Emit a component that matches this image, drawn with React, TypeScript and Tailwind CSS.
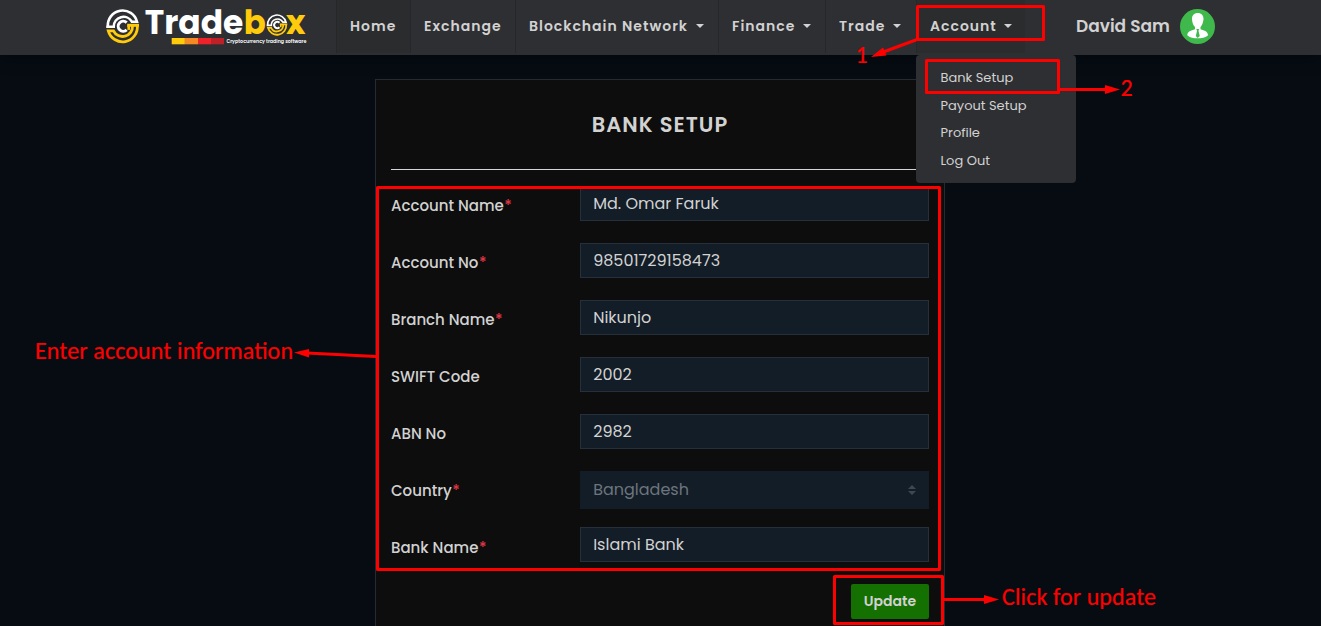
import { ReactNode } from "react";

function Emblem({ x, y, scale }: { x: number; y: number; scale: number }) {
  return (
    <g transform={`translate(${x} ${y}) scale(${scale})`} fill="none">
      <path d="M-14.8 .5A14.8 14.8 0 0 1 14.3 -4.5H9.3A9.8 9.8 0 0 0 -9 .5H-16.5" stroke="#fff" strokeWidth="2.6" />
      <path d="M4 -3.6A5 5 0 1 0 4 3.6" stroke="#fff" strokeWidth="3" />
      <path d="M4.5 -1H16.3" stroke="#ffcb0a" strokeWidth="3" />
      <path d="M6 -1V3.6" stroke="#ffcb0a" strokeWidth="2.6" />
      <path d="M14.6 -1A14.8 14.8 0 0 1 -14.4 4.5H-9.2A10 10 0 0 0 9.8 -.5" stroke="#ffcb0a" strokeWidth="2.8" />
    </g>
  );
}

function Logo() {
  return (
    <svg width="205" height="48" viewBox="104 0 205 48" className="block shrink-0 font-['Poppins','Inter',sans-serif]">
      <Emblem x={122.7} y={26.3} scale={1} />
      <text x="144.8" y="34.3" fontSize="34" fontWeight="700" fill="#fff" textLength="98.5" lengthAdjust="spacingAndGlyphs">Trade</text>
      <text x="243.8" y="34.3" fontSize="34" fontWeight="700" fill="#ffcb0a" textLength="22" lengthAdjust="spacingAndGlyphs">b</text>
      <Emblem x={277} y={25} scale={0.63} />
      <text x="286" y="34.3" fontSize="34" fontWeight="700" fill="#ffcb0a" textLength="19.5" lengthAdjust="spacingAndGlyphs">x</text>
      <rect x="171.7" y="38" width="13.2" height="6.3" fill="#ffcb0a" />
      <rect x="184.8" y="38" width="13.2" height="6.3" fill="#f58a25" />
      <rect x="198" y="38" width="13.2" height="6.3" fill="#ee2229" />
      <rect x="211" y="38" width="13" height="6.3" fill="#bd2026" />
      <text x="226.5" y="43" fontSize="4.8" fontWeight="600" fill="#fff" textLength="80" lengthAdjust="spacingAndGlyphs">Cryptocurrency trading software</text>
    </svg>
  );
}

function Caret({ className }: { className: string }) {
  return <span className={`relative -top-px block h-0 w-0 border-x-4 border-t-4 border-x-transparent border-t-[#d2d2d2] ${className}`} />;
}

function NavItem({ label, width, caret, active }: { label: string; width: string; caret?: string; active?: boolean }) {
  return (
    <a className={`flex h-[53px] shrink-0 items-center border-l border-[#26272a] pl-[13px] ${width} ${active ? "bg-[#2b2c2e]" : ""}`}>
      <span className="whitespace-nowrap text-[14px] font-semibold tracking-[1px] text-[#d2d2d2]">{label}</span>
      {caret && <Caret className={caret} />}
    </a>
  );
}

function Row({ label, required, pad = "pt-[9px]", className, children }: { label: string; required?: boolean; pad?: string; className: string; children: ReactNode }) {
  return (
    <div className={`flex shrink-0 ${className}`}>
      <label className={`w-[189px] shrink-0 whitespace-nowrap text-[15px] leading-[22px] font-medium text-[#d2d2d2] ${pad}`}>
        {label}
        {required && <span className="ml-[0.5px] text-[#dc3545]">*</span>}
      </label>
      {children}
    </div>
  );
}

function Field({ value }: { value: string }) {
  return (
    <div className="h-[35px] w-[349px] border border-[#26303a] bg-[#131d27] pl-[12.2px] text-[16px] leading-[33px] text-[#d2d2d2]">
      {value}
    </div>
  );
}

function Annotations() {
  return (
    <svg width="1321" height="626" className="pointer-events-none absolute inset-0 z-20 font-['Carlito','Lato',sans-serif]">
      <g fill="none" stroke="#f00" strokeWidth="3" strokeLinejoin="round">
        <rect x="917.5" y="6.5" width="126" height="33" />
        <rect x="926.5" y="60.5" width="132" height="32" />
        <rect x="377.5" y="187.5" width="562" height="382" />
        <rect x="834.5" y="576.5" width="108" height="47" />
        <path d="M917 39.5L882 52.5M1058 89.5H1106M376 356.5L307 353M943 599.5H986" />
      </g>
      <g fill="#f00">
        <path d="M871 57L883 47.5L886.5 55.5Z" />
        <path d="M1120 89.5L1105 85V94Z" />
        <path d="M294 352.5L309 349V357.5Z" />
        <path d="M999 599.5L984 595V604Z" />
        <g fontSize="24" stroke="#f00" strokeWidth="0.2">
          <text x="855.5" y="63">1</text>
          <text x="1120.5" y="96">2</text>
          <text x="35" y="359" textLength="258">Enter account information</text>
          <text x="1002" y="605" textLength="154">Click for update</text>
        </g>
      </g>
    </svg>
  );
}

export default function App() {
  return (
    <div className="relative flex h-[626px] w-[1321px] flex-col overflow-hidden bg-[#060c12] font-['Poppins','Inter',sans-serif]">
      <header className="relative z-10 flex h-[55px] shrink-0 items-start bg-[#2e2f33] pl-[104px] shadow-[0_2px_16px_rgba(0,0,10,0.4)]">
        <Logo />
        <nav className="ml-[27px] flex">
          <NavItem label="Home" width="w-[74px]" active />
          <NavItem label="Exchange" width="w-[105px]" />
          <NavItem label="Blockchain Network" width="w-[203px]" caret="ml-[8px]" />
          <NavItem label="Finance" width="w-[107px]" caret="ml-[8px]" />
          <NavItem label="Trade" width="w-[91px]" caret="ml-[8px]" />
          <div className="relative">
            <NavItem label="Account" width="w-[109px]" caret="ml-[7px]" active />
            <div className="absolute top-[55px] left-0 flex h-[128px] w-[160px] flex-col rounded-[4px] bg-[#2e2f33] pt-[9px] pl-[24.5px] text-[13px] leading-[27.6px] text-[#d2d2d2]">
              <a>Bank Setup</a>
              <a>Payout Setup</a>
              <a>Profile</a>
              <a>Log Out</a>
            </div>
          </div>
        </nav>
        <div className="ml-[51px] flex h-[53px] items-center">
          <span className="w-[104px] whitespace-nowrap text-[17px] font-semibold text-[#d2d2d2]">David Sam</span>
          <svg width="35" height="35" viewBox="0 0 35 35">
            <circle cx="17.5" cy="17.5" r="17.5" fill="#3fb94b" />
            <path d="M17.7 4C21.4 4 23.8 6.7 23.5 10.2C23.2 13.8 21.8 16.7 20.5 17.9V20.2C24.5 21.3 28 22.5 28 26.2C26 28.8 21 29.2 17.7 29.2C14 29.2 9.5 28.8 7.3 26.2C7.3 22.5 11 21.3 15 20.2V17.9C13.5 16.7 12.2 13.8 12 10.2C11.8 6.7 14 4 17.7 4Z" fill="#fff" />
            <path d="M16.4 20H19L18.5 22L19.8 27L17.7 29L15.8 27L17 22Z" fill="#3fb94b" />
          </svg>
        </div>
      </header>

      <main className="mt-6 ml-[375px] flex h-[560px] w-[570px] shrink-0 flex-col border border-[#262b33] bg-[#0d0d0d] px-[15px]">
        <h1 className="h-[90px] shrink-0 border-b border-[#d8d2dc] text-center text-[21px] leading-[90px] font-semibold tracking-[1px] text-[#d2d2d2]">BANK SETUP</h1>
        <form className="flex flex-col pt-4">
          <Row label="Account Name" required className="h-[57px]"><Field value="Md. Omar Faruk" /></Row>
          <Row label="Account No" required className="h-[57px]"><Field value="98501729158473" /></Row>
          <Row label="Branch Name" required className="h-[57px]"><Field value="Nikunjo" /></Row>
          <Row label="SWIFT Code" className="h-[57px]"><Field value="2002" /></Row>
          <Row label="ABN No" className="h-[57px]"><Field value="2982" /></Row>
          <Row label="Country" required className="h-[56px]">
            <div className="flex h-[38px] w-[349px] items-center justify-between bg-[#131d27] pr-[13px] pl-[13.2px] text-[16px] text-[#6c757d]">
              <span>Bangladesh</span>
              <svg width="8" height="10" viewBox="0 0 8 10" fill="#41474e"><path d="M0 4L4 0L8 4ZM0 6H8L4 10Z" /></svg>
            </div>
          </Row>
          <Row label="Bank Name" required pad="pt-[10px]" className="h-[57px]"><Field value="Islami Bank" /></Row>
          <button type="button" className="h-[35px] w-[78px] self-end rounded-[2px] bg-[#147000] text-[14px] font-semibold text-[#d2d2d2]">Update</button>
        </form>
      </main>
      <Annotations />
    </div>
  );
}
